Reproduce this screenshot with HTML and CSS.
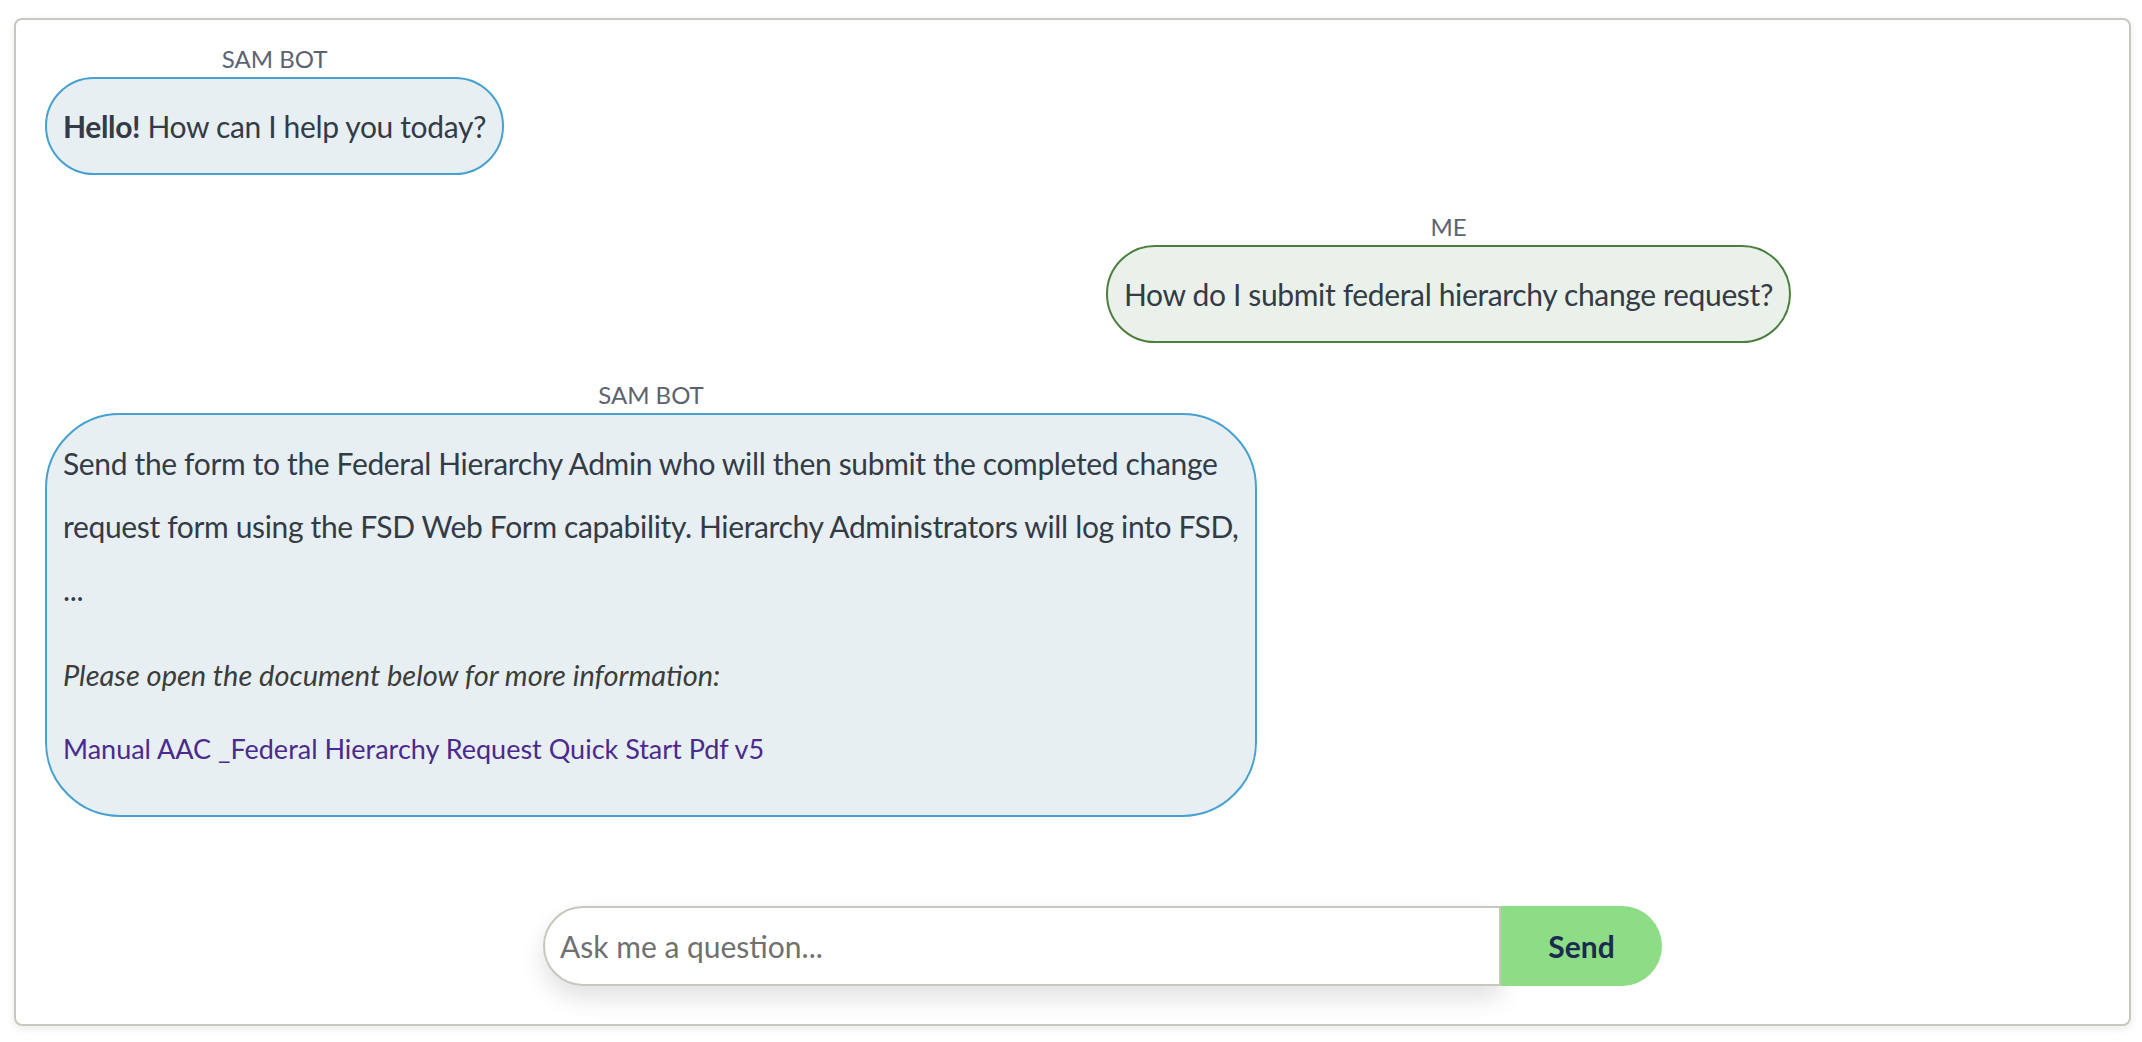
FILE: index.html
```html
<!DOCTYPE html>
<html lang="en">
<head>
<meta charset="utf-8">
<title>SAM Bot</title>
<link rel="stylesheet" href="styles.css">
</head>
<body>
<div class="chat">
  <div class="messages">
    <div class="msg">
      <div class="who">SAM BOT</div>
      <div class="bubble bot-bubble"><strong>Hello!</strong> How can I help you today?</div>
    </div>
    <div class="msg me">
      <div class="who">ME</div>
      <div class="bubble me-bubble">How do I submit federal hierarchy change request?</div>
    </div>
    <div class="msg">
      <div class="who">SAM BOT</div>
      <div class="bubble bot-bubble long">
        <p class="answer">Send the form to the Federal Hierarchy Admin who will then submit the completed change request form using the FSD Web Form capability. Hierarchy Administrators will log into FSD,<br>...</p>
        <p class="note"><em>Please open the document below for more information:</em></p>
        <p class="doc"><a href="#">Manual AAC _Federal Hierarchy Request Quick Start Pdf v5</a></p>
      </div>
    </div>
  </div>
  <form class="composer">
    <input class="ask" type="text" placeholder="Ask me a question...">
    <button class="send" type="button">Send</button>
  </form>
</div>
</body>
</html>
```
FILE: styles.css
```css
html, body {
  margin: 0;
  height: 100%;
  background: #fff;
}
body {
  box-sizing: border-box;
  padding: 18px 11px 16px 14px;
  font-family: Lato, "Liberation Sans", sans-serif;
  color: #333b46;
}
.chat {
  box-sizing: border-box;
  height: 100%;
  border: 2px solid #c8c8bf;
  border-radius: 8px;
  box-shadow: 0 3px 8px rgba(0, 0, 0, 0.08);
  display: flex;
  flex-direction: column;
  padding: 21px 0 38px 29px;
}
.messages {
  display: flex;
  flex-direction: column;
  align-items: flex-start;
  gap: 34px;
}
.msg {
  display: flex;
  flex-direction: column;
  align-items: center;
}
.msg.me {
  align-self: flex-end;
  margin-right: 338px;
}
.who {
  font-size: 24px;
  line-height: 36px;
  color: #5c6370;
}
.bubble {
  box-sizing: border-box;
  border: 2px solid;
  border-radius: 75px;
  font-size: 30px;
  line-height: 44px;
  letter-spacing: -0.35px;
  padding: 25px 16px;
}
.bot-bubble {
  background: #e7eff2;
  border-color: #47a1d0;
}
.me-bubble {
  background: #eaf1ea;
  border-color: #4c7f3f;
}
.long {
  max-width: 1212px;
  padding: 17px 16px 41px;
}
.long p {
  margin: 0;
}
.long .answer {
  line-height: 63px;
}
.long .note {
  font-size: 29px;
  line-height: 50px;
  letter-spacing: normal;
  margin-top: 29px;
  color: #3c3c3c;
}
.long .doc {
  font-size: 27px;
  line-height: 50px;
  letter-spacing: normal;
  margin-top: 24px;
}
.doc a {
  color: #4b2a8e;
  text-decoration: none;
}
.composer {
  margin: auto 0 0 498px;
  display: flex;
}
.ask {
  box-sizing: border-box;
  width: 958px;
  height: 80px;
  border: 2px solid #c7c7bf;
  border-radius: 40px 0 0 40px;
  padding: 0 15px;
  font-family: Lato, "Liberation Sans", sans-serif;
  font-size: 30px;
  color: #333b46;
  background: #fff;
  box-shadow: 0 12px 24px rgba(0, 0, 0, 0.12);
  outline: none;
}
.ask::placeholder {
  color: #707070;
}
.send {
  box-sizing: border-box;
  width: 161px;
  height: 80px;
  border: none;
  border-radius: 0 40px 40px 0;
  background: #8cdd85;
  color: #1b2b4f;
  font-family: Lato, "Liberation Sans", sans-serif;
  font-weight: 700;
  font-size: 30px;
  cursor: pointer;
}
```
